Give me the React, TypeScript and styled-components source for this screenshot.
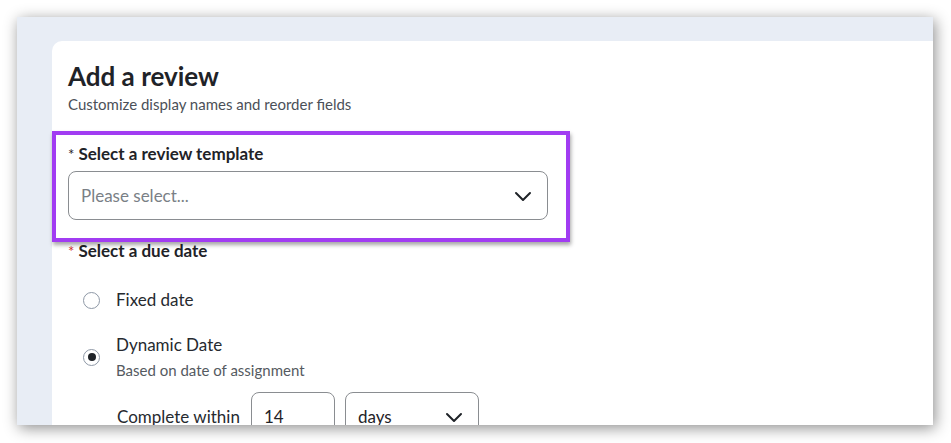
import React from "react";
import styled, { createGlobalStyle } from "styled-components";

const GlobalStyle = createGlobalStyle`
  html, body {
    margin: 0;
    padding: 0;
    background: #ffffff;
  }
  * {
    box-sizing: border-box;
  }
  body {
    font-family: "Lato", "Noto Sans", sans-serif;
    color: #1f2328;
  }
`;

const Page = styled.div`
  width: 951px;
  height: 443px;
  padding: 17px 18px 18px 17px;
  background: #ffffff;
`;

const Window = styled.div`
  width: 916px;
  height: 408px;
  background: #e8edf5;
  box-shadow: 2px 3px 14px rgba(0, 0, 0, 0.45);
  overflow: hidden;
  padding: 24px 0 0 35px;
`;

const Card = styled.div`
  height: 100%;
  background: #ffffff;
  border-top-left-radius: 10px;
  padding: 19px 16px 0 16px;
  display: flex;
  flex-direction: column;
`;

const Title = styled.h1`
  margin: 0;
  font-size: 26px;
  line-height: 32px;
  font-weight: 700;
  color: #1f2328;
`;

const Subtitle = styled.p`
  margin: 3px 0 0 0;
  font-size: 15px;
  line-height: 18px;
  color: #4b5058;
`;

const Highlight = styled.div`
  position: relative;
  z-index: 1;
  width: 518px;
  margin: 18px 0 0 -16px;
  border: 4px solid #a13cf2;
  box-shadow: 1px 3px 4px rgba(0, 0, 0, 0.35);
  padding: 9px 18px 18px 12px;
  background: #ffffff;
`;

const Label = styled.div`
  font-size: 17px;
  line-height: 20px;
  font-weight: 700;
  color: #1f2328;
`;

const Asterisk = styled.span<{ $red?: boolean }>`
  font-weight: 400;
  font-size: 15px;
  margin-right: 4px;
  color: ${(p) => (p.$red ? "#d0312d" : "#1f2328")};
`;

const SelectBox = styled.div<{ $width?: number }>`
  display: flex;
  align-items: center;
  justify-content: space-between;
  width: ${(p) => (p.$width ? `${p.$width}px` : "100%")};
  height: 49px;
  border: 1px solid #8a8d91;
  border-radius: 8px;
  padding: 0 14px 0 12px;
  font-size: 17px;
  color: #1f2328;
`;

const Placeholder = styled.span`
  color: #7a7f86;
`;

const FieldTop = styled.div`
  margin-top: 7px;
`;

const DueLabel = styled(Label)`
  margin-top: -1px;
`;

const RadioGroup = styled.div`
  display: flex;
  flex-direction: column;
  padding-left: 15px;
  margin-top: 29px;
  gap: 25px;
`;

const RadioRow = styled.div`
  display: flex;
  align-items: center;
  gap: 16px;
`;

const RadioCircle = styled.span<{ $checked?: boolean }>`
  width: 17px;
  height: 17px;
  border-radius: 50%;
  border: 1px solid #8e98a6;
  display: flex;
  align-items: center;
  justify-content: center;
  flex-shrink: 0;
  &::after {
    content: "";
    display: ${(p) => (p.$checked ? "block" : "none")};
    width: 8px;
    height: 8px;
    border-radius: 50%;
    background: #1f2328;
  }
`;

const RadioText = styled.div`
  display: flex;
  flex-direction: column;
`;

const RadioLabel = styled.span`
  font-size: 17px;
  line-height: 20px;
  color: #262a2f;
`;

const RadioHint = styled.span`
  margin-top: 6px;
  font-size: 15px;
  line-height: 18px;
  color: #555a61;
`;

const WithinRow = styled.div`
  display: flex;
  align-items: flex-start;
  gap: 10px;
  margin-top: 13px;
  padding-left: 49px;
`;

const WithinLabel = styled.span`
  font-size: 17px;
  line-height: 20px;
  margin-top: 15px;
  margin-right: 1px;
  color: #262a2f;
`;

const NumberInput = styled.div`
  width: 84px;
  height: 49px;
  border: 1px solid #8a8d91;
  border-radius: 8px;
  padding: 14px 12px 0 12px;
  font-size: 17px;
  line-height: 20px;
  color: #1f2328;
`;

const UnitSelect = styled(SelectBox)`
  align-items: flex-start;
  padding-top: 14px;
  line-height: 20px;
`;

const Chevron = () => (
  <svg width="20" height="20" viewBox="0 0 20 20" fill="none">
    <path
      d="M3 7 L10 14 L17 7"
      stroke="#1f2328"
      strokeWidth="2"
      strokeLinecap="round"
      strokeLinejoin="round"
    />
  </svg>
);

export default function App() {
  return (
    <>
      <GlobalStyle />
      <Page>
        <Window>
          <Card>
            <Title>Add a review</Title>
            <Subtitle>Customize display names and reorder fields</Subtitle>

            <Highlight>
              <Label>
                <Asterisk>*</Asterisk>Select a review template
              </Label>
              <FieldTop>
                <SelectBox>
                  <Placeholder>Please select...</Placeholder>
                  <Chevron />
                </SelectBox>
              </FieldTop>
            </Highlight>

            <DueLabel>
              <Asterisk $red>*</Asterisk>Select a due date
            </DueLabel>

            <RadioGroup>
              <RadioRow>
                <RadioCircle />
                <RadioLabel>Fixed date</RadioLabel>
              </RadioRow>
              <RadioRow>
                <RadioCircle $checked />
                <RadioText>
                  <RadioLabel>Dynamic Date</RadioLabel>
                  <RadioHint>Based on date of assignment</RadioHint>
                </RadioText>
              </RadioRow>
            </RadioGroup>

            <WithinRow>
              <WithinLabel>Complete within</WithinLabel>
              <NumberInput>14</NumberInput>
              <UnitSelect $width={134}>
                <span>days</span>
                <Chevron />
              </UnitSelect>
            </WithinRow>
          </Card>
        </Window>
      </Page>
    </>
  );
}
